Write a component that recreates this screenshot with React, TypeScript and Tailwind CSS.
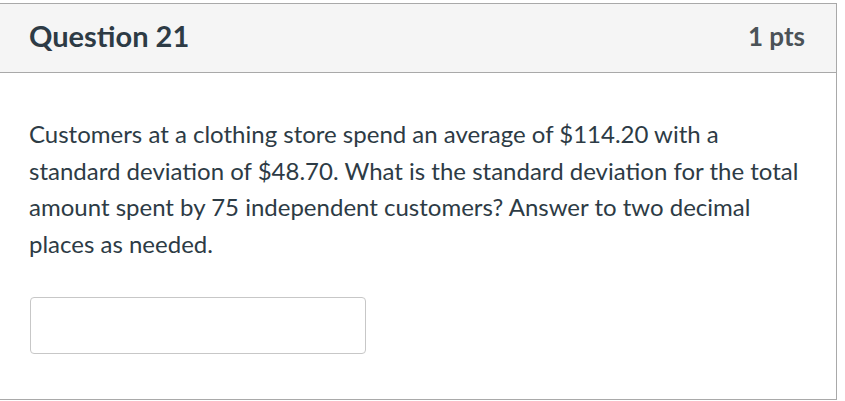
export default function App() {
  return (
    <div className="w-[845px] h-[401px] bg-white pt-[3px] overflow-hidden" style={{ fontFamily: "Lato, 'Noto Sans', sans-serif" }}>
      <div className="ml-[-1px] w-[838px] h-[397px] border border-[#a9a9a9] flex flex-col">
        <div className="h-[69px] bg-[#f5f5f5] border-b border-[#a9a9a9] flex items-center justify-between pl-[29px] pr-[31px] shrink-0">
          <div className="text-[29px] font-bold text-[#2d3b45] leading-none pb-[5px]">Question 21</div>
          <div className="text-[26px] font-bold text-[#4b5257] leading-none pb-[4px]">1 pts</div>
        </div>
        <div className="pl-[29px] pr-[31px] pt-[43px] text-[#2d3b45]">
          <p className="text-[24px] leading-[36.5px] m-0">
            Customers at a clothing store spend an average of $114.20 with a standard deviation of $48.70. What is the standard deviation for the total amount spent by 75 independent customers? Answer to two decimal places as needed.
          </p>
          <div className="mt-[35px] ml-[1px] w-[336px] h-[57px] border border-[#c7c7c7] rounded-[4px] bg-white"></div>
        </div>
      </div>
    </div>
  );
}
